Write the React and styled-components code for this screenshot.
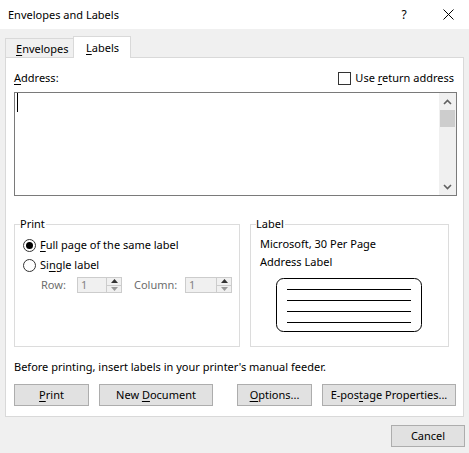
import React from "react";
import styled, { createGlobalStyle } from "styled-components";

const Global = createGlobalStyle`
  html, body { margin: 0; padding: 0; }
  body {
    background: #f0f0f0;
    font-family: "Segoe UI", "Noto Sans", sans-serif;
    font-size: 11px;
    color: #000;
  }
  * { box-sizing: border-box; }
`;

const Window = styled.div`
  width: 469px;
  height: 453px;
  background: #f0f0f0;
  display: flex;
  flex-direction: column;
  overflow: hidden;
`;

const TitleBar = styled.div`
  height: 29px;
  background: #fff;
  display: flex;
  align-items: center;
  padding-left: 8px;
`;

const Title = styled.div`
  flex: 1;
  font-size: 11px;
  line-height: 16px;
`;

const TitleButton = styled.div`
  width: ${(p) => p.$w}px;
  height: 29px;
  display: flex;
  align-items: center;
  justify-content: center;
  font-size: 12px;
`;

const Body = styled.div`
  padding: 7px 5px 0 5px;
  display: flex;
  flex-direction: column;
`;

const TabRow = styled.div`
  display: flex;
  align-items: flex-end;
  height: 22px;
  margin-bottom: -1px;
  position: relative;
  z-index: 1;
`;

const Tab = styled.div`
  width: ${(p) => p.$w}px;
  height: ${(p) => (p.$active ? 22 : 19)}px;
  margin-bottom: ${(p) => (p.$active ? 0 : 1)}px;
  background: ${(p) => (p.$active ? "#fff" : "#f0f0f0")};
  border: 1px solid #d9d9d9;
  border-bottom: none;
  border-right: ${(p) => (p.$active ? "1px solid #d9d9d9" : "none")};
  padding-left: ${(p) => p.$pl}px;
  display: flex;
  align-items: center;
  line-height: 16px;
  padding-top: ${(p) => (p.$active ? 0 : 1)}px;
`;

const Panel = styled.div`
  width: 459px;
  height: 360px;
  background: #fff;
  border: 1px solid #d9d9d9;
  padding: 0 6px 0 8px;
  display: flex;
  flex-direction: column;
`;

const U = styled.span`
  text-decoration: underline;
  text-underline-offset: 2px;
  text-decoration-thickness: 1px;
`;

const AddressRow = styled.div`
  margin-top: 10px;
  height: 20px;
  display: flex;
  align-items: center;
  justify-content: space-between;
  line-height: 16px;
`;

const CheckRow = styled.label`
  display: flex;
  align-items: center;
  gap: 4px;
  padding-right: 3px;
`;

const CheckBox = styled.span`
  width: 13px;
  height: 13px;
  border: 1px solid #333;
  background: #fff;
  display: inline-block;
`;

const TextBox = styled.div`
  margin-top: 4px;
  height: 104px;
  width: 443px;
  border: 1px solid #7a7a7a;
  display: flex;
  background: #fff;
`;

const TextArea = styled.div`
  flex: 1;
  padding: 0 0 0 2px;
`;

const Caret = styled.span`
  display: block;
  width: 1px;
  height: 19px;
  background: #000;
`;

const ScrollBar = styled.div`
  width: 17px;
  background: #f0f0f0;
  display: flex;
  flex-direction: column;
`;

const ScrollArrow = styled.div`
  height: 17px;
  display: flex;
  align-items: center;
  justify-content: center;
`;

const Thumb = styled.div`
  height: 17px;
  margin: 0 1px;
  background: #cdcdcd;
`;

const Track = styled.div`
  flex: 1;
`;

const GroupsRow = styled.div`
  margin-top: 20px;
  display: flex;
  gap: 10px;
`;

const Group = styled.fieldset`
  margin: 0;
  width: ${(p) => p.$w}px;
  height: 131px;
  border: 1px solid #dcdcdc;
  padding: 3px 0 0 8px;
  min-width: 0;
`;

const Legend = styled.legend`
  padding: 0 1px 0 0;
  margin-left: -3px;
  line-height: 16px;
  height: 16px;
`;

const RadioRow = styled.label`
  height: 20px;
  display: flex;
  align-items: center;
  gap: 4px;
  line-height: 16px;
`;

const Radio = styled.span`
  width: 13px;
  height: 13px;
  border-radius: 50%;
  border: 1px solid #333;
  background: #fff;
  display: flex;
  align-items: center;
  justify-content: center;
  &::after {
    content: "";
    display: ${(p) => (p.$checked ? "block" : "none")};
    width: 7px;
    height: 7px;
    border-radius: 50%;
    background: #000;
  }
`;

const SpinRow = styled.div`
  height: 20px;
  display: flex;
  align-items: center;
  padding-left: 18px;
  color: #6d6d6d;
  line-height: 16px;
`;

const SpinLabel = styled.span`
  width: ${(p) => p.$w}px;
  margin-left: ${(p) => p.$ml || 0}px;
`;

const SpinBox = styled.div`
  width: ${(p) => p.$w}px;
  height: 16px;
  border: 1px solid #cccccc;
  background: #f0f0f0;
  display: flex;
`;

const SpinValue = styled.div`
  flex: 1;
  padding-left: 3px;
  line-height: 14px;
  color: #838383;
`;

const SpinButtons = styled.div`
  width: 15px;
  display: flex;
  flex-direction: column;
  border-left: 1px solid #cccccc;
`;

const SpinHalf = styled.div`
  flex: 1;
  display: flex;
  align-items: center;
  justify-content: center;
  border-bottom: ${(p) => (p.$top ? "1px solid #cccccc" : "none")};
`;

const LabelText = styled.div`
  line-height: 18px;
  padding-left: 1px;
`;

const LabelPicture = styled.div`
  margin-top: 7px;
  display: flex;
  justify-content: center;
  padding-right: 8px;
`;

const Notice = styled.div`
  margin-top: 12px;
  line-height: 16px;
`;

const ButtonRow = styled.div`
  margin-top: 9px;
  display: flex;
  justify-content: space-between;
  padding-right: 1px;
`;

const ButtonGroup = styled.div`
  display: flex;
  gap: 10px;
`;

const Button = styled.button`
  width: ${(p) => p.$w}px;
  height: 22px;
  background: #e1e1e1;
  border: 1px solid #adadad;
  font: inherit;
  font-size: 11px;
  color: #000;
  padding: 0;
  line-height: 16px;
`;

const Footer = styled.div`
  display: flex;
  justify-content: flex-end;
  margin-top: 8px;
  margin-right: -1px;
`;

const Chevron = ({ up }) => (
  <svg width="9" height="6" viewBox="0 0 9 6">
    <polyline
      points={up ? "1,5 4.5,1.5 8,5" : "1,1 4.5,4.5 8,1"}
      fill="none"
      stroke="#606060"
      strokeWidth="1.6"
    />
  </svg>
);

const Tri = ({ up, color }) => (
  <svg width="7" height="4" viewBox="0 0 7 4">
    <polygon points={up ? "0,4 3.5,0 7,4" : "0,0 3.5,4 7,0"} fill={color} />
  </svg>
);

const Spinner = ({ w }) => (
  <SpinBox $w={w}>
    <SpinValue>1</SpinValue>
    <SpinButtons>
      <SpinHalf $top>
        <Tri up color="#333" />
      </SpinHalf>
      <SpinHalf>
        <Tri color="#9a9a9a" />
      </SpinHalf>
    </SpinButtons>
  </SpinBox>
);

const LabelDrawing = () => (
  <svg width="147" height="55" viewBox="0 0 147 55">
    <rect x="0.5" y="0.5" width="145" height="53" rx="7" ry="7" fill="#fff" stroke="#000" strokeWidth="1" />
    {[11.5, 22.5, 33.5, 44.5].map((y) => (
      <line key={y} x1="11" x2="135" y1={y} y2={y} stroke="#000" strokeWidth="1" />
    ))}
  </svg>
);

export default function App() {
  return (
    <>
      <Global />
      <Window>
        <TitleBar>
          <Title>Envelopes and Labels</Title>
          <TitleButton $w={46}>?</TitleButton>
          <TitleButton $w={42}>
            <svg width="11" height="11" viewBox="0 0 11 11">
              <line x1="0.5" y1="0.5" x2="10.5" y2="10.5" stroke="#000" strokeWidth="1" />
              <line x1="10.5" y1="0.5" x2="0.5" y2="10.5" stroke="#000" strokeWidth="1" />
            </svg>
          </TitleButton>
        </TitleBar>
        <Body>
          <TabRow>
            <Tab $w={68} $pl={10}>
              <span><U>E</U>nvelopes</span>
            </Tab>
            <Tab $w={58} $pl={12} $active>
              <span><U>L</U>abels</span>
            </Tab>
          </TabRow>
          <Panel>
            <AddressRow>
              <span><U>A</U>ddress:</span>
              <CheckRow>
                <CheckBox />
                <span>Use <U>r</U>eturn address</span>
              </CheckRow>
            </AddressRow>
            <TextBox>
              <TextArea>
                <Caret />
              </TextArea>
              <ScrollBar>
                <ScrollArrow><Chevron up /></ScrollArrow>
                <Thumb />
                <Track />
                <ScrollArrow><Chevron /></ScrollArrow>
              </ScrollBar>
            </TextBox>
            <GroupsRow>
              <Group $w={226}>
                <Legend>Print</Legend>
                <RadioRow>
                  <Radio $checked />
                  <span><U>F</U>ull page of the same label</span>
                </RadioRow>
                <RadioRow>
                  <Radio />
                  <span>Si<U>n</U>gle label</span>
                </RadioRow>
                <SpinRow>
                  <SpinLabel $w={36}>Row:</SpinLabel>
                  <Spinner w={45} />
                  <SpinLabel $w={51} $ml={12}>Column:</SpinLabel>
                  <Spinner w={47} />
                </SpinRow>
              </Group>
              <Group $w={199}>
                <Legend>Label</Legend>
                <LabelText>Microsoft, 30 Per Page</LabelText>
                <LabelText>Address Label</LabelText>
                <LabelPicture>
                  <LabelDrawing />
                </LabelPicture>
              </Group>
            </GroupsRow>
            <Notice>Before printing, insert labels in your printer's manual feeder.</Notice>
            <ButtonRow>
              <ButtonGroup>
                <Button $w={75}><U>P</U>rint</Button>
                <Button $w={114}>New <U>D</U>ocument</Button>
              </ButtonGroup>
              <ButtonGroup>
                <Button $w={75}><U>O</U>ptions...</Button>
                <Button $w={134}>E-pos<U>t</U>age Properties...</Button>
              </ButtonGroup>
            </ButtonRow>
          </Panel>
          <Footer>
            <Button $w={74}>Cancel</Button>
          </Footer>
        </Body>
      </Window>
    </>
  );
}
